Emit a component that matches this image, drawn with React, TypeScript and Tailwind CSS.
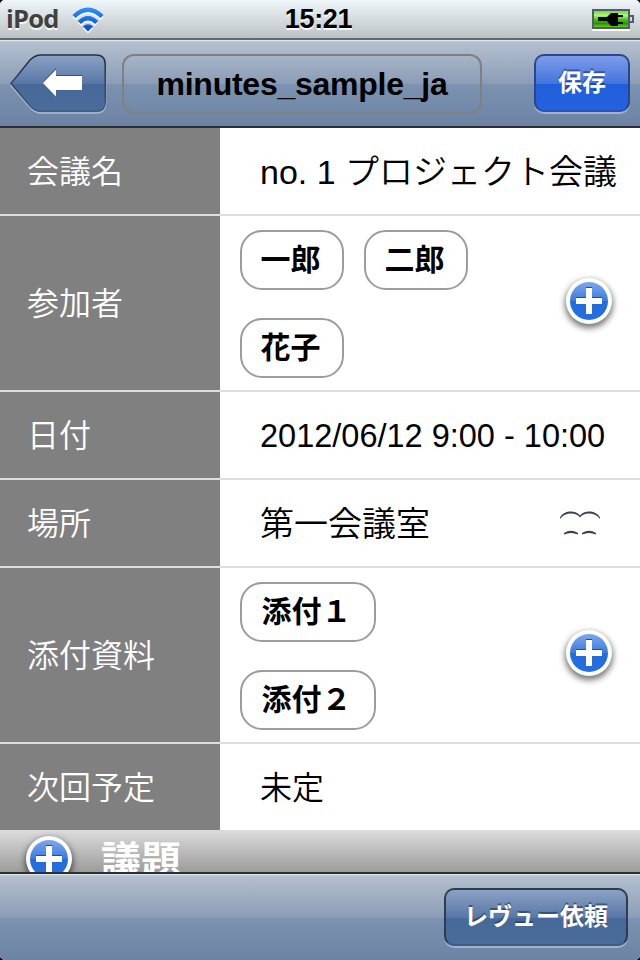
import type { ReactNode } from "react";

const FONT = "font-['Liberation_Sans','Noto_Sans_CJK_JP',sans-serif]";

function Row({ label, height, children }: { label: string; height: string; children: ReactNode }) {
  return (
    <div className={`flex shrink-0 border-b-2 border-[#dedede] last:border-b-0 ${height}`}>
      <div className="flex w-[220px] shrink-0 items-center bg-[#808080] pt-[2px] pl-[27px] text-[32px] leading-[48px] font-[350] text-white">
        {label}
      </div>
      <div className="flex min-w-0 flex-1 items-center bg-white pt-[2px] text-black">{children}</div>
    </div>
  );
}

function Chip({ children, wide = false }: { children: ReactNode; wide?: boolean }) {
  return (
    <span
      className={`flex h-[60px] items-center justify-center rounded-[22px] border-2 border-[#9c9c9c] pr-[3px] text-[30px] leading-[44px] font-bold whitespace-nowrap ${wide ? "w-[136px]" : "w-[104px]"}`}
    >
      {children}
    </span>
  );
}

function PlusIcon() {
  return (
    <span className="flex size-[46px] shrink-0 items-center justify-center rounded-full bg-white shadow-[0_3px_6px_1px_rgba(0,0,0,0.55)]">
      <svg width="38" height="38" viewBox="0 0 38 38">
        <defs>
          <linearGradient id="plusFill" x1="0" y1="0" x2="0" y2="1">
            <stop offset="0" stopColor="#7ea8ea" />
            <stop offset="0.49" stopColor="#3c7ae0" />
            <stop offset="0.51" stopColor="#236cdb" />
            <stop offset="1" stopColor="#246fdf" />
          </linearGradient>
        </defs>
        <circle cx="19" cy="19" r="19" fill="url(#plusFill)" />
        <path d="M16 5h6v10h10v7H22v10h-6V22H6v-7h10z" fill="#0c50bd" />
        <path d="M16 6h6v10h10v6H22v10h-6V22H6v-6h10z" fill="#fff" />
      </svg>
    </span>
  );
}

function StatusBar() {
  return (
    <div className="grid h-[40px] shrink-0 grid-cols-3 items-center border-b-2 border-[#5f6c6e] bg-linear-to-b from-[#eff7fa] to-[#bcc2c4]">
      <div className="flex items-center pl-[6px]">
        <span className="-mt-[2px] w-[53px] text-[25.500px] leading-[38px] font-bold tracking-[-0.8px] text-[#404040] [text-shadow:0_2px_0_#f4f8f9] font-['Open_Sans',sans-serif]">
          iPod
        </span>
        <svg className="mt-[1px] ml-[12px]" width="34" height="28" viewBox="0 0 34 28" fill="none">
          <defs>
            <linearGradient id="wifi" gradientUnits="userSpaceOnUse" x1="0" y1="2" x2="0" y2="26">
              <stop offset="0" stopColor="#2a91f2" />
              <stop offset="1" stopColor="#0647d5" />
            </linearGradient>
          </defs>
          <g transform="translate(0 2)" stroke="#fafcfc" strokeWidth="4.4">
            <path d="M3 10.5Q17-3 31 10.5" />
            <path d="M8.400 16.500Q17 8 25.600 16.500" />
            <path d="M12 20.500Q17 16 22 20.500L17 25.500z" fill="#fafcfc" stroke="none" />
          </g>
          <g stroke="url(#wifi)" strokeWidth="4.4">
            <path d="M3 10.5Q17-3 31 10.5" />
            <path d="M8.400 16.500Q17 8 25.600 16.500" />
            <path d="M12 20.500Q17 16 22 20.500L17 25.500z" fill="url(#wifi)" stroke="none" />
          </g>
        </svg>
      </div>
      <div className="pr-[3px] text-center text-[27px] leading-[38px] font-bold tracking-[-0.300px] text-black [text-shadow:0_2px_0_#f4f8f9]">
        15:21
      </div>
      <svg className="justify-self-end mr-[4px]" width="44" height="24" viewBox="0 0 44 24">
        <defs>
          <linearGradient id="charge" x1="0" y1="0" x2="0" y2="1">
            <stop offset="0" stopColor="#5fd52b" />
            <stop offset="0.3" stopColor="#b0f778" />
            <stop offset="0.52" stopColor="#4fc316" />
            <stop offset="0.75" stopColor="#259500" />
            <stop offset="1" stopColor="#70dc30" />
          </linearGradient>
        </defs>
        <path d="M0 22h38v2H0z" fill="#fafcfc" />
        <rect x="1" y="3" width="36" height="18" fill="url(#charge)" stroke="#555a6c" strokeWidth="2" />
        <path d="M38 9h3v6h-3" fill="none" stroke="#555a6c" strokeWidth="2" />
        <path d="M6 10h9l4-4h7v2h5v2h-5v5h5v2h-5v2h-7l-4-5H6z" fill="#000" />
      </svg>
    </div>
  );
}

function NavBar() {
  return (
    <div className="flex h-[88px] shrink-0 items-start border-b-2 border-[#2a3135] bg-[linear-gradient(#edf0f3_0,#b3c0cf_2px,#8b9cb6_44px,#7c92b0_44px,#6d83a4_100%)] pt-[14px] pr-[10px] pl-[10px]">
      <svg className="shrink-0" width="97" height="60" viewBox="0 0 97 60">
        <defs>
          <linearGradient id="backFill" x1="0" y1="0" x2="0" y2="1">
            <stop offset="0" stopColor="#8ba2c4" />
            <stop offset="0.51" stopColor="#5877a6" />
            <stop offset="0.52" stopColor="#476999" />
            <stop offset="1" stopColor="#4a6c9b" />
          </linearGradient>
          <linearGradient id="backEdge" x1="0" y1="0" x2="0" y2="1">
            <stop offset="0" stopColor="#28303f" />
            <stop offset="1" stopColor="#3f5c86" />
          </linearGradient>
        </defs>
        <path
          d="M1 31.500L20 8Q25 2.500 31 2.500H86Q95.500 2.500 95.500 12V50Q95.500 59 86 59H31Q25 59 20 53.500z"
          fill="none"
          stroke="#adbbcd"
          strokeWidth="1.500"
        />
        <path
          d="M1 29.500L20 6Q25 1 31 1H86Q95.200 1 95.200 10V48Q95.200 57.300 86 57.300H31Q25 57.300 20 52z"
          fill="url(#backFill)"
          stroke="url(#backEdge)"
          strokeWidth="1.600"
        />
        <path d="M33 28L46 14v7h26v15H46v6z" fill="#39506f" />
        <path d="M33 29L46 15.500v6.500h26v14H46v6.500z" fill="#fff" />
      </svg>
      <div className="ml-[15px] flex h-[60px] w-[360px] shrink-0 items-center justify-center rounded-[12px] border-2 border-[#808080] text-[32px] leading-[40px] font-bold tracking-[-0.250px] text-black">
        minutes_sample_ja
      </div>
      <button className="ml-auto h-[58px] w-[96px] rounded-[10px] border-2 border-[#2a4688] border-b-[#2454b8] bg-[linear-gradient(#7d9ce9_0,#4474dd_51%,#205fdc_51%,#2561df_100%)] text-[24px] leading-[52px] font-bold text-white shadow-[0_2px_0_#a3b2c7] [text-shadow:0_-2px_0_rgba(25,50,105,0.6)]">
        保存
      </button>
    </div>
  );
}

export default function App() {
  return (
    <div className="bg-black">
      <div className={`flex h-[960px] w-[640px] flex-col overflow-hidden rounded-[5px] bg-white ${FONT}`}>
        <StatusBar />
        <NavBar />
        <main className="flex h-[744px] shrink-0 flex-col overflow-hidden">
          <section className="flex shrink-0 flex-col">
            <Row label="会議名" height="h-[88px]">
              <span className="pl-[40px] text-[34px] leading-[50px] font-[350] whitespace-nowrap">
                <span className="font-normal">no. 1 </span>プロジェクト会議
              </span>
            </Row>
            <Row label="参加者" height="h-[176px]">
              <div className="flex w-[300px] flex-wrap gap-x-[20px] gap-y-[28px] pl-[20px]">
                <Chip>一郎</Chip>
                <Chip>二郎</Chip>
                <Chip>花子</Chip>
              </div>
              <div className="-mt-[6px] ml-[46px]">
                <PlusIcon />
              </div>
            </Row>
            <Row label="日付" height="h-[88px]">
              <span className="pl-[40px] text-[32.500px] leading-[48px] whitespace-nowrap">2012/06/12 9:00 - 10:00</span>
            </Row>
            <Row label="場所" height="h-[88px]">
              <span className="pl-[40px] text-[34px] leading-[50px] font-[350]">第一会議室</span>
              <svg className="-mt-[2px] mr-[39px] ml-auto" width="42" height="28" viewBox="0 0 42 28" fill="#364252">
                <path d="M1 8.500C5 1 17 1 21 6.500C25 1 37 1 41 8.500V10C36 3 25 3 21 8.500C17 3 6 3 1 10z" />
                <path d="M5 24Q12 19.500 19 24V25.500Q12 22.500 5 25.500zM23 24Q30 19.500 37 24V25.500Q30 22.500 23 25.500z" />
              </svg>
            </Row>
            <Row label="添付資料" height="h-[176px]">
              <div className="flex w-[300px] flex-col gap-[28px] pl-[20px]">
                <Chip wide>添付１</Chip>
                <Chip wide>添付２</Chip>
              </div>
              <div className="-mt-[6px] ml-[46px]">
                <PlusIcon />
              </div>
            </Row>
            <Row label="次回予定" height="h-[86px]">
              <span className="pl-[40px] text-[32px] leading-[48px] font-[350]">未定</span>
            </Row>
          </section>
          <section className="flex h-[60px] shrink-0 items-start bg-[linear-gradient(#dcdcdc_0,#9c9c9c_42px)] pt-[6px] pl-[26px]">
            <PlusIcon />
            <h2 className="mt-[1px] ml-[29px] text-[40px] leading-[48px] font-bold text-white">議題</h2>
          </section>
        </main>
        <footer className="flex h-[88px] shrink-0 items-start justify-end border-t-2 border-[#2a3135] bg-[linear-gradient(#edf0f3_0,#b3c0cf_2px,#8b9cb6_44px,#7c92b0_44px,#6d83a4_100%)] pt-[14px] pr-[12px]">
          <button className="h-[58px] w-[184px] rounded-[10px] border-2 border-[#2e3b50] border-b-[#3f5c86] bg-[linear-gradient(#8ba2c4_0,#5877a6_51%,#476999_51%,#4a6c9b_100%)] text-[24px] leading-[52px] font-bold text-white shadow-[0_2px_0_#a3b2c7] [text-shadow:0_-2px_0_rgba(35,50,75,0.6)]">
            レヴュー依頼
          </button>
        </footer>
      </div>
    </div>
  );
}
